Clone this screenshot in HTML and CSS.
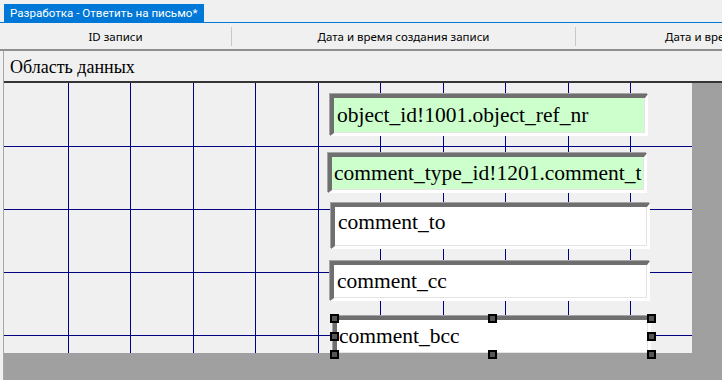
FILE: index.html
```html
<!DOCTYPE html>
<html lang="ru">
<head>
  <meta charset="UTF-8">
  <title>Разработка - Ответить на письмо</title>
  <link rel="stylesheet" href="styles.css">
</head>
<body>
  <!-- Tab strip -->
  <div class="tabbar">
    <span class="tab">Разработка - Ответить на письмо*</span>
  </div>

  <!-- Column headers -->
  <div class="columns">
    <div class="col col-id">ID записи</div>
    <div class="col col-created">Дата и время создания записи</div>
    <div class="col col-changed">Дата и время изменения записи</div>
  </div>

  <!-- Report designer -->
  <div class="designer">
    <div class="band">Область данных</div>
    <div class="workspace">
      <div class="canvas">
        <div class="field field-lookup f-object">object_id!1001.object_ref_nr</div>
        <div class="field field-lookup f-type">comment_type_id!1201.comment_t</div>
        <div class="field f-to">comment_to</div>
        <div class="field f-cc">comment_cc</div>
        <div class="field f-bcc">comment_bcc</div>

        <div class="selection">
          <span class="handle h-tl"></span>
          <span class="handle h-tm"></span>
          <span class="handle h-tr"></span>
          <span class="handle h-ml"></span>
          <span class="handle h-mr"></span>
          <span class="handle h-bl"></span>
          <span class="handle h-bm"></span>
          <span class="handle h-br"></span>
        </div>
      </div>
      <div class="gutter"></div>
    </div>
    <div class="footer"></div>
  </div>
</body>
</html>
```

FILE: styles.css
```css
/* General */
body {
  margin: 0;
  background: #f0f0f0;
  font-family: 'Noto Sans', 'Liberation Sans', sans-serif;
  color: #000;
  width: 722px;
  height: 380px;
  overflow: hidden;
}

/* Tab strip */
.tabbar {
  height: 18px;
  padding: 4px 0 0 4px;
  border-bottom: 1px solid #0078d7;
  display: flex;
}

.tab {
  background: #0078d7;
  color: #fff;
  font-family: Roboto, 'Noto Sans', sans-serif;
  font-size: 11.6px;
  line-height: 18px;
  width: 200px;
  padding-left: 6px;
  box-sizing: border-box;
  white-space: nowrap;
}

/* Column headers */
.columns {
  display: flex;
  height: 26px;
  border-bottom: 2px solid #8f8f8f;
  overflow: hidden;
}

.col {
  display: flex;
  align-items: center;
  justify-content: center;
  font-size: 11.5px;
  white-space: nowrap;
  border-right: 1px solid #c9c9c9;
  margin: 4px 0 3px;
  flex-shrink: 0;
}

.col-id {
  width: 231px;
}

.col-created {
  width: 343px;
}

.col-changed {
  width: 360px;
}

/* Designer */
.designer {
  margin-left: 3px;
  border-left: 1px solid #a8a8a8;
}

.band {
  height: 30px;
  padding-left: 6px;
  font-family: 'Liberation Serif', serif;
  font-size: 18px;
  line-height: 33px;
  border-bottom: 2px solid #353535;
}

.workspace {
  display: flex;
  height: 270px;
  background: #a0a0a0;
}

/* design grid: columns every 62.5px, rows every 63px */
.canvas {
  position: relative;
  width: 688px;
  background-color: #f0f0f0;
  background-image:
    repeating-linear-gradient(to right, #000080 0 1px, transparent 1px 62px, #000080 62px 63px, transparent 63px 125px),
    repeating-linear-gradient(to bottom, #000080 0 1px, transparent 1px 63px);
  background-size: 625px 100%, 100% 252px;
  background-position: 64px 0, 0 63px;
  background-repeat: no-repeat;
}

.gutter {
  flex: 1;
}

.footer {
  height: 27px;
  background: #a0a0a0;
}

/* Fields */
.field {
  position: absolute;
  box-sizing: border-box;
  background: #fff;
  border-style: solid;
  border-width: 4px 3px 3px 4px;
  border-color: #6f6f6f #fff #fff #6f6f6f;
  box-shadow: inset -1px -1px 0 #e4e4e4, -1px -1px 0 #a4a4a4;
  font-family: 'Liberation Serif', serif;
  font-size: 21.5px;
  padding-left: 3px;
  display: flex;
  align-items: center;
  white-space: nowrap;
  overflow: hidden;
}

.field-lookup {
  background: #ccffcc;
}

.f-object {
  left: 326px;
  top: 11px;
  width: 318px;
  height: 42px;
}

.f-type {
  left: 324px;
  top: 70px;
  width: 319px;
  height: 40px;
  padding-left: 2px;
}

.f-to {
  left: 327px;
  top: 120px;
  width: 319px;
  height: 46px;
  align-items: flex-start;
  padding-top: 3px;
}

.f-cc {
  left: 326px;
  top: 178px;
  width: 320px;
  height: 40px;
}

.f-bcc {
  left: 329px;
  top: 233px;
  width: 318px;
  height: 37px;
  border-bottom-width: 0;
  padding-left: 2px;
}

/* Selection handles */
.selection {
  position: absolute;
  left: 326px;
  top: 231px;
  width: 326px;
  height: 45px;
}

.handle {
  position: absolute;
  width: 9px;
  height: 9px;
  box-sizing: border-box;
  background: #555;
  border: 2px solid #000;
}

.h-tl { left: 0; top: 0; }
.h-tm { left: 158px; top: 0; }
.h-tr { right: 0; top: 0; }
.h-ml { left: 0; top: 18px; }
.h-mr { right: 0; top: 18px; }
.h-bl { left: 0; bottom: 0; }
.h-bm { left: 158px; bottom: 0; }
.h-br { right: 0; bottom: 0; }
```
